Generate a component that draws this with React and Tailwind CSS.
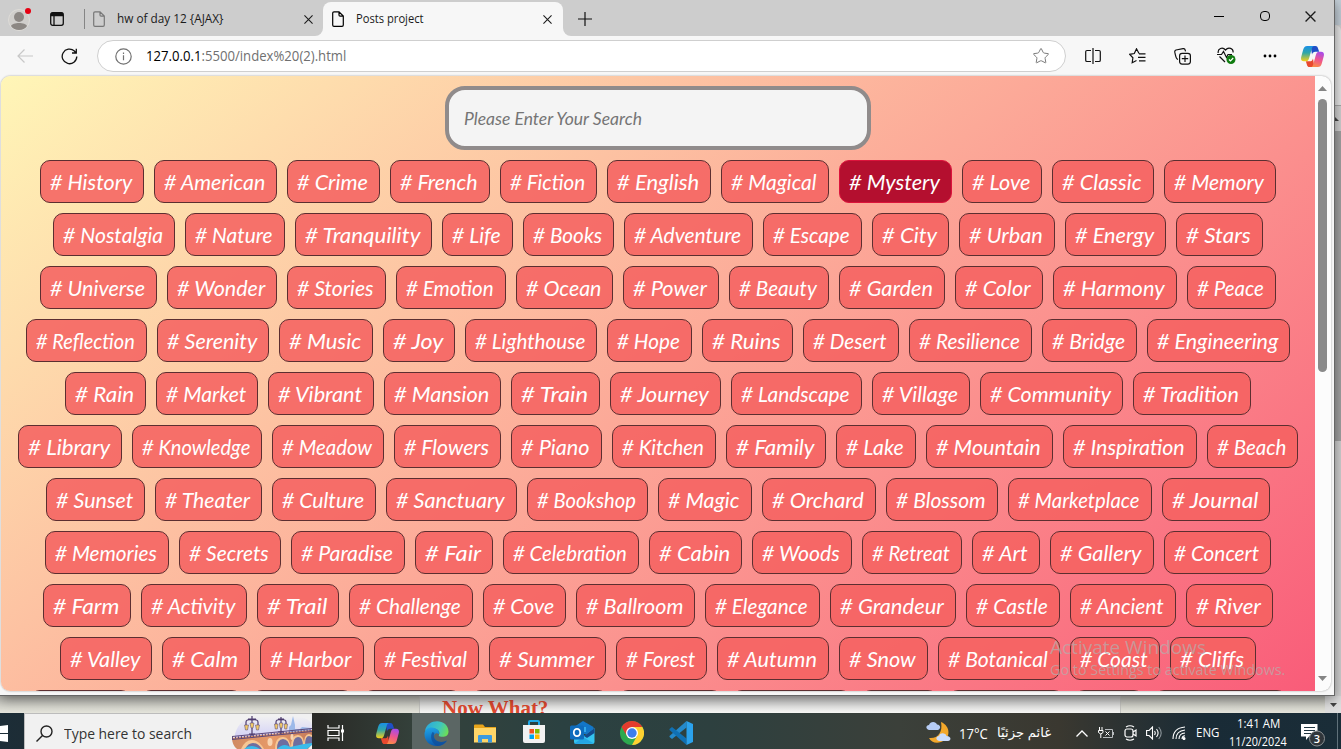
import { useLayoutEffect, useRef } from "react";
import { Star } from "lucide-react";

// Text squeezed or stretched horizontally to a given width.
function Fit({ w, children, className = "" }) {
  const ref = useRef(null);
  useLayoutEffect(() => {
    const el = ref.current;
    el.style.transform = `scaleX(${w / el.offsetWidth})`;
  }, [w]);
  return (
    <span className={"block shrink-0 " + className} style={{ width: w }}>
      <span ref={ref} className="inline-block origin-left whitespace-nowrap">{children}</span>
    </span>
  );
}

const ROWS = [
  [["History", 104], ["American", 123], ["Crime", 93], ["French", 100], ["Fiction", 97], ["English", 104], ["Magical", 108], ["Mystery", 113], ["Love", 80], ["Classic", 102], ["Memory", 112]],
  [["Nostalgia", 122], ["Nature", 100], ["Tranquility", 137], ["Life", 71], ["Books", 91], ["Adventure", 129], ["Escape", 99], ["City", 77], ["Urban", 96], ["Energy", 101], ["Stars", 87]],
  [["Universe", 117], ["Wonder", 110], ["Stories", 99], ["Emotion", 110], ["Ocean", 97], ["Power", 96], ["Beauty", 100], ["Garden", 106], ["Color", 88], ["Harmony", 124], ["Peace", 89]],
  [["Reflection", 121], ["Serenity", 112], ["Music", 94], ["Joy", 72], ["Lighthouse", 132], ["Hope", 85], ["Ruins", 91], ["Desert", 96], ["Resilience", 123], ["Bridge", 95], ["Engineering", 143]],
  [["Rain", 81], ["Market", 102], ["Vibrant", 106], ["Mansion", 117], ["Train", 89], ["Journey", 111], ["Landscape", 131], ["Village", 98], ["Community", 143], ["Tradition", 118]],
  [["Library", 104], ["Knowledge", 130], ["Meadow", 112], ["Flowers", 107], ["Piano", 91], ["Kitchen", 104], ["Family", 100], ["Lake", 80], ["Mountain", 127], ["Inspiration", 134], ["Beach", 91]],
  [["Sunset", 99], ["Theater", 107], ["Culture", 104], ["Sanctuary", 131], ["Bookshop", 121], ["Magic", 94], ["Orchard", 114], ["Blossom", 112], ["Marketplace", 144], ["Journal", 108]],
  [["Memories", 124], ["Secrets", 102], ["Paradise", 114], ["Fair", 78], ["Celebration", 136], ["Cabin", 93], ["Woods", 100], ["Retreat", 100], ["Art", 68], ["Gallery", 104], ["Concert", 107]],
  [["Farm", 88], ["Activity", 106], ["Trail", 82], ["Challenge", 124], ["Cove", 83], ["Ballroom", 119], ["Elegance", 115], ["Grandeur", 126], ["Castle", 94], ["Ancient", 106], ["River", 87]],
  [["Valley", 92], ["Calm", 88], ["Harbor", 104], ["Festival", 105], ["Summer", 117], ["Forest", 91], ["Autumn", 112], ["Snow", 89], ["Botanical", 122], ["Coast", 90], ["Cliffs", 86]],
  [["", 101], ["", 101], ["", 101], ["", 98], ["", 137], ["", 104], ["", 119], ["", 77], ["", 116], ["", 70], ["", 133]],
];

const Doc = ({ className }) => (
  <svg width="12" height="16" viewBox="0 0 12 16" fill="none" stroke="currentColor" strokeWidth="1.2" className={className}>
    <path d="M2 .8h5l4.3 4.3V14q0 1.3-1.3 1.3H2Q.7 15.3.7 14V2Q.7.8 2 .8zM7 .8V4q0 1.1 1.1 1.1h3.2" />
  </svg>
);

const Cross = ({ size = 9 }) => (
  <svg width={size} height={size} viewBox="0 0 10 10" stroke="#1b1b1b" strokeWidth="1.2" fill="none"><path d="M.5.5l9 9M9.5.5l-9 9" /></svg>
);

const Slot = ({ className = "", children }) => (
  <div className={"flex h-full shrink-0 items-center justify-center " + className}>{children}</div>
);

function Copilot({ id, className = "" }) {
  return (
    <svg width="23" height="21" viewBox="0 0 24 22" className={className}>
      <defs>
        <linearGradient id={id + "a"} x1="0" y1="0" x2="0" y2="1"><stop stopColor="#1a8fe8" /><stop offset=".45" stopColor="#2fa7a8" /><stop offset="1" stopColor="#f7d016" /></linearGradient>
        <linearGradient id={id + "b"} x1=".6" y1="0" x2=".3" y2="1"><stop stopColor="#a94be8" /><stop offset=".5" stopColor="#f0568c" /><stop offset="1" stopColor="#fb8d45" /></linearGradient>
      </defs>
      <path d="M10 0h5c2 0 2.400 1.200 3 3.200L19 6h-4c-2 0-3 1-3.500 3z" fill="#1f4fc6" />
      <path d="M14 22H9c-2 0-2.500-1.200-3-3l-1-3h4c2 0 3-1 3.500-3z" fill="#e8492e" />
      <path d="M6.500 0H14c-1.500 0-2.200 1-2.800 3L8.500 12.500C7.800 15 7 16 5 16H3c-3 0-3.400-2.200-2.700-5L2.200 4C3 1.300 4 0 6.500 0z" fill={`url(#${id}a)`} />
      <path d="M17.500 22H10c1.500 0 2.200-1 2.800-3l2.700-9.500C16.200 7 17 6 19 6h2c3 0 3.400 2.200 2.700 5l-1.900 7c-.8 2.700-1.800 4-4.300 4z" fill={`url(#${id}b)`} />
    </svg>
  );
}

function TabStrip() {
  return (
    <div className="flex h-9 shrink-0 items-center bg-[#cdcdcd]">
      <Slot className="w-[38px] pt-0.5">
        <svg width="24" height="26" viewBox="0 0 24 26">
          <circle cx="12" cy="14" r="10.500" fill="#d0cecb" stroke="#dedcd8" />
          <circle cx="12" cy="11" r="5" fill="#8c8783" />
          <path d="M4 20c1.500-4 14.500-4 16 0-3 5.400-13 5.400-16 0z" fill="#8c8783" />
          <circle cx="21" cy="5" r="3" fill="#e60012" />
        </svg>
      </Slot>
      <Slot className="w-[38px] pt-0.5">
        <svg width="14" height="14" viewBox="0 0 14 14" fill="none" stroke="#111" strokeWidth="1.300"><rect x=".7" y=".7" width="12.600" height="12.600" rx="2" /><path d="M4 4v9" /><path d="M1 2.500h12" strokeWidth="3.500" /></svg>
      </Slot>
      <div className="mt-0.5 ml-2 h-5 w-px bg-[#858585]" />
      <div className="flex h-full w-[238px] items-center pt-0.5 pl-2">
        <Doc className="text-[#777]" />
        <Fit w={106} className="ml-3">hw of day 12 {"{AJAX}"}</Fit>
        <div className="ml-[81px]"><Cross /></div>
      </div>
      <div className="relative mt-0.5 flex h-[34px] w-[240px] items-center rounded-t-lg bg-[#f7f7f7] pl-[9px]">
        <div className="absolute -left-2 bottom-0 size-2 bg-[#f7f7f7]"><div className="size-2 rounded-br-lg bg-[#cdcdcd]" /></div>
        <div className="absolute -right-2 bottom-0 size-2 bg-[#f7f7f7]"><div className="size-2 rounded-bl-lg bg-[#cdcdcd]" /></div>
        <Doc className="text-black" />
        <Fit w={68} className="ml-3">Posts project</Fit>
        <div className="ml-[119px]"><Cross /></div>
      </div>
      <Slot className="w-[43px] pt-px"><svg width="14" height="14" viewBox="0 0 14 14" stroke="#111" strokeWidth="1.200"><path d="M7 0v14M0 7h14" /></svg></Slot>
      <div className="flex-1" />
      <Slot className="w-[46px] pb-1"><div className="h-px w-[10px] bg-black" /></Slot>
      <Slot className="w-[46px] pb-1"><div className="size-[10px] rounded-sm border border-black" /></Slot>
      <Slot className="w-[46px] pr-px pb-1"><Cross size={11} /></Slot>
    </div>
  );
}

function Toolbar() {
  return (
    <div className="flex h-10 shrink-0 items-center bg-[#f7f7f7]">
      <Slot className="w-[50px]">
        <svg width="16" height="14" viewBox="0 0 16 14" fill="none" stroke="#c8c8c8" strokeWidth="1.200"><path d="M16 7H1M7.500.5L1 7l6.500 6.500" /></svg>
      </Slot>
      <Slot className="w-[38px]">
        <svg width="17" height="17" viewBox="0 0 17 17" fill="none" stroke="#111" strokeWidth="1.300"><path d="M15.800 8.500A7.300 7.300 0 1 1 13.400 3L15 5M15.300.8V5h-4.300" /></svg>
      </Slot>
      <div className="ml-[9px] flex h-8 w-[969px] items-center rounded-full border border-[#cfcfcf] bg-white pl-[17px]">
        <svg width="17" height="17" viewBox="0 0 17 17" fill="none" stroke="#717171" strokeWidth="1.200"><circle cx="8.500" cy="8.500" r="7.700" /><path d="M8.500 7.300v5M8.500 4.500v1.500" /></svg>
        <Fit w={200} className="-mt-px ml-[14px] text-[14px] text-[#707070]"><span className="text-black">127.0.0.1</span>:5500/index%20(2).html</Fit>
        <Star size={18} strokeWidth={1.300} className="ml-auto mr-[15px] text-[#777]" />
      </div>
      <Slot className="ml-[5px] w-11">
        <svg width="16" height="16" viewBox="0 0 16 16" fill="none" stroke="#111" strokeWidth="1.200"><path d="M6 2.500H2q-1.300 0-1.300 1.300v8.400q0 1.300 1.300 1.300h4M10 2.500h4q1.300 0 1.300 1.300v8.400q0 1.300-1.300 1.300h-4M8 0v16" /></svg>
      </Slot>
      <Slot className="w-[45px]">
        <svg width="17" height="16" viewBox="0 0 17 16" fill="none" stroke="#111" strokeWidth="1.200"><path d="M10 5.500L7.500.8 5.300 5.500.7 6.300l3.200 3.500-.7 4.900 4.300-2.200M10 5.800h6.500M9 9.300h7.500M10 12.800h6.500" /></svg>
      </Slot>
      <Slot className="w-11">
        <svg width="17" height="17" viewBox="0 0 17 17" fill="none" stroke="#111" strokeWidth="1.200"><rect x="5.600" y="5.300" width="10.800" height="10.800" rx="2.500" /><path d="M11 7.500v6.400M7.800 10.700h6.400M4 11.500C2 11 2 9.500.8 4.200Q.5 2.500 2 2l7-1.400q1.800-.2 2.200 1.500l.3 1.300" /></svg>
      </Slot>
      <Slot className="w-[45px]">
        <svg width="19" height="18" viewBox="0 0 19 18" fill="none" stroke="#111" strokeWidth="1.200"><path d="M1.200 6C.5 1.500 5.500-.5 8.500 3c3-3.500 8-1.500 7.600 2.500M0 7.500h4.500l2-3 3 6 1.500-3h4M2.500 9.500L8 15" /><circle cx="14" cy="12.500" r="4.500" fill="#107c10" stroke="none" /><path d="M12 12.500l1.500 1.500 2.700-3" stroke="#fff" /></svg>
      </Slot>
      <Slot className="w-[42px]">
        <svg width="14" height="4" viewBox="0 0 14 4"><circle cx="2" cy="2" r="1.400" /><circle cx="7" cy="2" r="1.400" /><circle cx="12" cy="2" r="1.400" /></svg>
      </Slot>
      <Slot className="w-[42px]"><Copilot id="t" /></Slot>
    </div>
  );
}

function Page() {
  return (
    <div className="mx-[1px] flex h-[615px] w-[1330px] shrink-0 overflow-hidden rounded-[9px] bg-[#fcfcfc] shadow-[0_0_2px_#999]">
      <div className="flex h-full w-[1314px] flex-col items-center gap-2.5 overflow-hidden bg-[linear-gradient(141deg,#fff6b7,#f95c79)] pt-2.5 font-['Lato','Liberation_Sans',sans-serif] italic">
        <div className="flex h-16 w-[426px] shrink-0 items-center rounded-[20px] border-4 border-[#908b8b] bg-[#f4f4f4] pl-[15px] text-[18px] text-[#757575]">
          <Fit w={178}>Please Enter Your Search</Fit>
        </div>
        {ROWS.map((row, i) => (
          <div key={i} className="flex h-[43px] shrink-0 gap-2.5 text-[22px] leading-[41px] text-white">
            {row.map(([name, w], j) => (
              <div
                key={j}
                className={"flex h-[43px] shrink-0 rounded-[10px] border pl-[9px] " + (name === "Mystery" ? "border-[#dc143c] bg-[#b40f2f]" : "border-[#5c2e30] bg-[rgba(245,98,97,0.87)]")}
                style={{ width: w }}
              >
                {name && <Fit w={w - 22}># {name}</Fit>}
              </div>
            ))}
          </div>
        ))}
      </div>
      <div className="flex w-4 flex-col items-center pt-2.5 pr-[2px] pb-[10px]">
        <svg width="9" height="5" viewBox="0 0 9 5" fill="#858585"><path d="M4.500 0L9 5H0z" /></svg>
        <div className="mt-2 h-[273px] w-[9px] rounded-full bg-[#8a8a8a]" />
        <svg width="9" height="5" viewBox="0 0 9 5" fill="#858585" className="mt-auto"><path d="M0 0h9L4.500 5z" /></svg>
      </div>
    </div>
  );
}

const Bridge = () => (
  <svg width="80" height="35" viewBox="0 0 80 35" className="ml-auto">
    <defs>
      <linearGradient id="sky" x1="0" y1="0" x2="0" y2="1"><stop stopColor="#f0f0f2" /><stop offset="1" stopColor="#cfcdf7" /></linearGradient>
      <linearGradient id="stone" x1="0" y1="0" x2="1" y2="0"><stop stopColor="#d08a62" /><stop offset=".5" stopColor="#e79a68" /><stop offset="1" stopColor="#c47a5a" /></linearGradient>
    </defs>
    <path d="M3 20Q8 3 25 3h40q12 0 15 8v15H3z" fill="url(#sky)" />
    <path d="M57 18v-5l2-2 2-9 2 9v4h5l2-2 9 1v6H57z" fill="#9cb9e9" />
    <path d="M0 24L80 16V30l-4 5H5Q0 31 0 24z" fill="url(#stone)" />
    <path d="M9 35q4-9 11-9t12 9z" fill="#f6c795" />
    <path d="M43 35q0-12 8-12 7 0 8 12zM59 33q0-12 7-12 6 0 6 10zM72 31q0-11 5-11l3 1v8z" fill="#f6c795" />
    <path d="M13 35q3-6 8-6t9 6zM45 35q0-10 6-10 6 0 7 10zM61 33q0-10 5-10 5 0 5 9zM73 31q0-9 4-9l3 1v8z" fill="#6e6e9f" />
    <path d="M12 35q7-6 16 0zM45 35q7-7 13-2l14-3 8-1v2l-5 4z" fill="#3bbbea" />
    <path d="M0 22.500L80 14.500M0 25.500L80 17.500" stroke="#5b4779" strokeWidth="1" />
    <path d="M0 24L80 16" stroke="#5b4779" strokeWidth="2" strokeDasharray="1 2" />
    <g stroke="#4d3b6d" strokeWidth="1.200" fill="none"><path d="M20 2v20M14 12V8q0-3 6-2 6-1 6 2v4M16 5h8M17 20h6M49 3v17M44 11V8q0-3 5-2 5-1 5 2v3M46 5h6M46 18h6" /></g>
    <g fill="#f2cb69" stroke="#4d3b6d" strokeWidth=".5"><path d="M12.500 11h4l-1 5h-2zM23.500 11h4l-1 5h-2zM18 9h4l-1 5h-2zM42.500 10h3.500l-.7 5h-2zM52 10h3.500l-.7 5h-2zM47.300 9h3.500l-.7 5h-2z" /></g>
    <ellipse cx="38" cy="28" rx="2.500" ry="4" fill="#f8d5b2" /><ellipse cx="60" cy="23" rx="1.500" ry="3" fill="#f8d5b2" />
  </svg>
);

const Edge = () => (
  <svg width="25" height="25" viewBox="0 0 25 25">
    <defs>
      <linearGradient id="e1" x1="0" y1=".3" x2="1" y2=".6"><stop stopColor="#2ba9dd" /><stop offset=".6" stopColor="#40c7bb" /><stop offset="1" stopColor="#6dde56" /></linearGradient>
      <linearGradient id="e2" x1=".3" y1="0" x2=".5" y2="1"><stop stopColor="#1fa1e6" /><stop offset="1" stopColor="#0b57ac" /></linearGradient>
    </defs>
    <path d="M1 10C3-3 24-3 24.500 10.500c0 5-5 6-8.500 5-2-.6-1-1.500-.6-3C16 8 8 5 1 10z" fill="url(#e1)" />
    <path d="M.5 13C1 7 7 5.500 11 7.300c4 1.700 4.600 4 3.800 6-3-3-6 1-4.300 4.200 2 4 8 4.500 12.500 2C20 24 16 25 12.500 25 6 25 .3 20 .5 13z" fill="url(#e2)" />
    <path d="M8.500 11c-3 4-1 12 5 13.900 4 0 7.500-2 9.500-5.400-5 2.500-10.500 1.500-12.500-2-1-2-.7-4 0-5.400z" fill="#104f99" opacity=".75" />
  </svg>
);

function Taskbar() {
  return (
    <div className="flex h-9 shrink-0 items-center bg-[linear-gradient(90deg,#1c2d37_0%,#2a2b27_24%,#34413b_31%,#2b4141_42%,#2d403f_53%,#3b403a_67%,#3a3830_79%,#192b36_90%,#1a2d38_100%)] text-white">
      <div className="flex h-full w-6 items-center pt-1">
        <svg width="8" height="17" viewBox="0 0 8 17" fill="#fff"><path d="M0 1l8-1v8H0zM0 9h8v8l-8-1z" /></svg>
      </div>
      <div className="flex h-full w-[288px] items-center border-t border-l border-[#bdbdbd] bg-[#f1f1f1] pl-[11px]">
        <svg width="17" height="17" viewBox="0 0 17 17" fill="none" stroke="#222" strokeWidth="1.400" className="mt-1"><circle cx="10.500" cy="6.500" r="5.500" /><path d="M6.500 10.500L.5 16.500" /></svg>
        <Fit w={128} className="mt-1 ml-[11px] text-[15px] text-[#333]">Type here to search</Fit>
        <Bridge />
      </div>
      <Slot className="w-[50px] pt-1 pr-1">
        <svg width="17" height="16" viewBox="0 0 17 16" fill="none" stroke="#fff" strokeWidth="1.200"><path d="M1 0v3h11V0M1 16v-3h11v3M1 5.500h11v5H1zM15.500 0v16" /><rect x="14" y="4.500" width="3" height="3" fill="#fff" stroke="none" /></svg>
      </Slot>
      <Slot className="w-[50px] pt-1"><Copilot id="b" /></Slot>
      <Slot className="w-12 bg-[#5b6664] pt-1"><Edge /></Slot>
      <Slot className="w-[49px] pt-1">
        <svg width="22" height="19" viewBox="0 0 22 19"><path d="M0 1.500Q0 .5 1 .5h8l2 2.500h11v15H0z" fill="#e8a51b" /><path d="M0 4h22v14.500H0z" fill="#ffd668" /><path d="M4 18.500V12q0-1 1-1h12q1 0 1 1v6.500h-4V15H8v3.500z" fill="#3b9ae0" /></svg>
      </Slot>
      <Slot className="w-[49px] pt-0.5">
        <svg width="24" height="24" viewBox="0 0 24 24"><path d="M7 5V2q0-1 1-1h8q1 0 1 1v3" fill="none" stroke="#20a8e7" strokeWidth="2" /><path d="M1 5h22v16q0 2-2 2H3q-2 0-2-2z" fill="#f2f2f2" /><path d="M7.500 9H12v4.500H7.500z" fill="#f25022" /><path d="M13 9h4.500v4.500H13z" fill="#7fba00" /><path d="M7.500 14.500H12V19H7.500z" fill="#00a4ef" /><path d="M13 14.500h4.500V19H13z" fill="#ffb900" /></svg>
      </Slot>
      <Slot className="w-[49px] pt-0.5">
        <svg width="25" height="23" viewBox="0 0 25 23"><path d="M4 6l9-6 10.500 6v7H4z" fill="#1376c8" /><path d="M8 6h8v5H8z" fill="#33a9ea" /><path d="M4 10l10 5 10.500-8v14q0 2-2 2H6q-2 0-2-2z" fill="#35c4ef" /><path d="M14 15l10.500-8v5L17 17z" fill="#144a8c" /><path d="M4 23l9-7 11 6.500z" fill="#1993dc" opacity=".6" /><rect y="4.500" width="14" height="14" rx="1.500" fill="#0f6cbd" /><ellipse cx="7" cy="11.500" rx="3.200" ry="3.600" fill="none" stroke="#fff" strokeWidth="1.800" /></svg>
      </Slot>
      <Slot className="w-[49px] pt-1">
        <svg width="24" height="24" viewBox="0 0 24 24"><circle cx="12" cy="12" r="12" fill="#2da94f" /><path d="M1.600 6A12 12 0 0 1 22.400 6H12z" fill="#e33b2e" /><path d="M1.600 6L7 15l5-9z" fill="#e33b2e" /><path d="M22.400 6A12 12 0 0 1 12 24l5-9-5-9z" fill="#fdd131" /><circle cx="12" cy="12" r="6" fill="#fff" /><circle cx="12" cy="12" r="4.700" fill="#3b7ded" /></svg>
      </Slot>
      <Slot className="w-[49px] pt-1">
        <svg width="24" height="24" viewBox="0 0 24 24"><path d="M17.500 0v6.500L3 18l-2.500-2v-1z" fill="#2489ca" /><path d="M.5 8L3 6l14.500 11.500V24L.5 9z" fill="#1070b3" /><path d="M17.500 0L24 3v18l-6.500 3z" fill="#2ba2ec" /></svg>
      </Slot>
      <div className="flex-1" />
      <svg width="25" height="23" viewBox="0 0 25 23" className="mt-0.5"><path d="M15 1c10 4 10 17 0 20-5 2-10 0-12-4 9 1 14-6 12-16z" fill="#f3a82b" /><path d="M3 9C-1 8 0 4 3 4c1-4 7-4 8-.5C15 4 15 8 12 9z" fill="#b7cdf5" /><path d="M13 20c-4-1-3-5 0-5 1-4 7-3 7.500 0 5 0 5 5 1.500 5z" fill="#cbdcfb" /></svg>
      <Fit w={29} className="mt-1 ml-2 text-[14px]">17°C</Fit>
      <Fit w={54} className="mt-1 ml-[9px] font-['Noto_Sans','DejaVu_Sans',sans-serif] text-[13px]"><span dir="rtl">غائم جزئيًا</span></Fit>
      <svg width="12" height="7" viewBox="0 0 12 7" fill="none" stroke="#fff" strokeWidth="1.300" className="mt-1 ml-[25px]"><path d="M.5 6.500L6 1l5.500 5.500" /></svg>
      <svg width="16" height="12" viewBox="0 0 16 12" fill="none" stroke="#fff" className="mt-1 ml-[10px]"><path d="M1.500 0v3M4 0v3M.5 3.500h4.500v2L2.800 7 .5 5.500zM2.800 7v4" /><path d="M5 10.500h9.500v-8H7M15.500 5v3" stroke="#b8bcbe" /><path d="M7.500 4.500l4 4M11.500 4.500l-4 4" /></svg>
      <svg width="13" height="16" viewBox="0 0 13 16" fill="none" stroke="#fff" strokeWidth="1.200" className="mt-1 ml-[10px]"><rect x="1" y="4" width="8" height="8" rx="2" /><path d="M9 7l3-2v6L9 9M2 2Q6-.5 10 2M2 14q4 2.500 8 0" /></svg>
      <svg width="16" height="14" viewBox="0 0 16 14" fill="none" stroke="#fff" strokeWidth="1.100" className="mt-1 ml-[9px]"><path d="M.6 4.500h2.500L6.500 1v12L3.100 9.500H.6zM8.500 5q1.500 2 0 4M10.500 3q3.200 4 0 8" /><path d="M12.700 1q5 6 0 12" stroke="#8b9499" /></svg>
      <svg width="14" height="14" viewBox="0 0 14 14" fill="none" stroke="#fff" strokeWidth="1.100" className="mt-1 ml-[10px]"><path d="M1 13Q1 2 13 1M4 13q0-8 9-9M7 13q0-5.500 6-6M10 13q0-3 3-3.200" /><circle cx="12" cy="12.500" r="1" fill="#fff" /></svg>
      <Fit w={23} className="mt-1 ml-[10px] text-[13px]">ENG</Fit>
      <div className="ml-[10px] flex w-[58px] flex-col items-center pt-1 text-[12px] leading-[18px]">
        <Fit w={43}>1:41 AM</Fit>
        <Fit w={58}>11/20/2024</Fit>
      </div>
      <svg width="26" height="25" viewBox="0 0 26 25" className="mt-2 ml-[14px]"><path d="M0 1h16.500v12.500H8L5 17v-3.500H0z" fill="#fff" /><path d="M3 4.500h11M3 7.500h11M3 10.500h7" stroke="#213642" /><circle cx="16" cy="15.500" r="7.500" fill="#30363b" stroke="#8b8f92" /><text x="16" y="19.500" textAnchor="middle" fontSize="11" fontWeight="600" fill="#fff">3</text></svg>
      <div className="ml-[10px] h-full w-[4px] shrink-0 border-l border-[#60717a]" />
    </div>
  );
}

export default function App() {
  return (
    <div className="relative flex h-[749px] w-[1341px] flex-col overflow-hidden bg-[#e4e4dd] font-['Open_Sans','Noto_Sans',sans-serif] text-[12px] text-[#1b1b1b]">
      <div className="flex h-[696px] shrink-0">
        <div className="z-10 flex w-[1335px] flex-col border-r border-b border-[#666] bg-[#f7f7f7] shadow-[0_3px_12px_#0007]">
          <TabStrip />
          <Toolbar />
          <Page />
        </div>
        <div className="flex w-[6px] flex-col bg-[#d4d4d4]">
          <div className="h-[25px] bg-[#c5d0d9]" />
          <div className="h-20 rounded-tr-md bg-[#e9e9e9]" />
          <div className="flex h-[26px] items-center border-t border-[#aaa] bg-[#d4d4d4]"><svg width="4" height="4" viewBox="0 0 4 4"><path d="M0 0l4 4H0z" fill="#444" /></svg></div>
          <div className="h-[310px] bg-[#a4a4a4]" />
        </div>
      </div>
      <div className="flex h-[17px] shrink-0 overflow-hidden bg-[#e4e4dd]">
        <div className="w-[419px] bg-[linear-gradient(#bcbcb6,#e5e5dc)]" />
        <div className="w-[702px] border-x border-[#c4c4c0] bg-[linear-gradient(#c8c8c8,#f7f7f5)] pl-[22px] font-['Liberation_Serif',serif] text-[21px] leading-[24px] font-bold text-[#df4930]">
          <Fit w={106}>Now What?</Fit>
        </div>
        <div className="w-[204px] bg-[linear-gradient(#bcbcb6,#e5e5dc)]" />
        <div className="flex flex-1 items-center justify-center bg-[#dedede]"><svg width="7" height="4" viewBox="0 0 7 4"><path d="M0 0h7L3.500 4z" fill="#444" /></svg></div>
      </div>
      <Taskbar />
      <div className="absolute top-[635px] left-[1050px] z-20 text-[#b9a9a9]/75">
        <Fit w={156} className="text-[19px] leading-[25px]">Activate Windows</Fit>
        <Fit w={235} className="text-[14px] leading-[20px]">Go to Settings to activate Windows.</Fit>
      </div>
    </div>
  );
}
